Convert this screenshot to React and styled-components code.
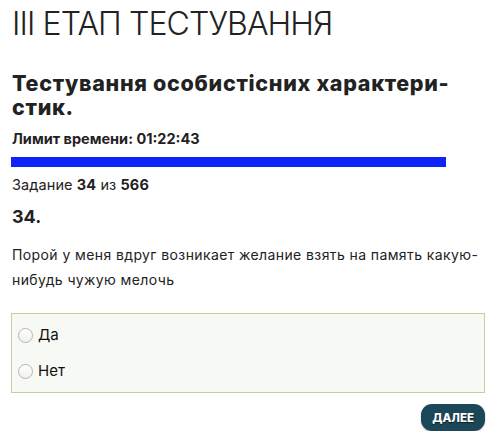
import React from "react";
import styled, { createGlobalStyle } from "styled-components";

const Global = createGlobalStyle`
  html, body { margin: 0; padding: 0; background: #fff; }
  body { font-family: Inter, "Liberation Sans", Arial, sans-serif; color: #222; }
`;

const Page = styled.div`
  padding: 5px 0 0 12px;
  width: 478px;
`;

const StageTitle = styled.h1`
  margin: 0;
  font-family: Inter, "Liberation Sans", sans-serif;
  font-weight: 300;
  font-size: 32px;
  line-height: 38px;
  color: #222;
  letter-spacing: -0.9px;
`;

const TestTitle = styled.h2`
  margin: 28px 0 0;
  font-size: 21.5px;
  line-height: 24px;
  font-weight: 800;
  color: #222;
  letter-spacing: 0.7px;
`;

const Timer = styled.div`
  margin-top: 11px;
  font-size: 14.5px;
  font-weight: 700;
  line-height: 18px;
  color: #222;
`;

const Bar = styled.div`
  margin-top: 9px;
  height: 10px;
  width: 435px;
  margin-left: -1px;
  background: #0f22f8;
`;

const Counter = styled.div`
  margin-top: 9px;
  font-size: 14.5px;
  line-height: 18px;
  color: #222;
  letter-spacing: 0.1px;
  b { font-weight: 700; }
`;

const Number = styled.h3`
  margin: 12px 0 0;
  font-size: 18px;
  line-height: 22px;
  font-weight: 700;
  color: #222;
`;

const Question = styled.p`
  margin: 14px 0 0;
  font-size: 14px;
  line-height: 25px;
  color: #222;
  letter-spacing: 0.4px;
`;

const Answers = styled.div`
  margin: 21px 5px 0 -1px;
  border: 1px solid #c3d29c;
  background: #f7f9f4;
  padding: 9px 6px 9px;
  display: flex;
  flex-direction: column;
  gap: 12px;
`;

const Option = styled.label`
  display: flex;
  align-items: center;
  gap: 5px;
  font-size: 15px;
  line-height: 24px;
  color: #111;
  cursor: pointer;
`;

const Radio = styled.span`
  width: 13px;
  height: 13px;
  border-radius: 50%;
  border: 1px solid #b5b5b5;
  background: linear-gradient(#fff, #f0f0f0);
  flex: none;
`;

const Footer = styled.div`
  display: flex;
  justify-content: flex-end;
  margin-top: 11px;
  padding-right: 5px;
`;

const NextButton = styled.button`
  border: none;
  background: #1b4759;
  color: #fff;
  font-family: Inter, "Liberation Sans", Arial, sans-serif;
  font-weight: 800;
  font-size: 11.5px;
  text-transform: uppercase;
  padding: 0 11px;
  height: 27px;
  border-radius: 11px;
  text-shadow: 0 1px 1px rgba(0,0,0,0.6);
  box-shadow: 0 1px 2px rgba(0,0,0,0.25);
`;

export default function App() {
  return (
    <>
      <Global />
      <Page>
        <StageTitle>III ЕТАП ТЕСТУВАННЯ</StageTitle>
        <TestTitle>
          Тестування особистісних характери-
          <br />
          стик.
        </TestTitle>
        <Timer>Лимит времени: 01:22:43</Timer>
        <Bar />
        <Counter>
          Задание <b>34</b> из <b>566</b>
        </Counter>
        <Number>34.</Number>
        <Question>
          Порой у меня вдруг возникает желание взять на память какую-нибудь чужую мелочь
        </Question>
        <Answers>
          <Option>
            <Radio />
            Да
          </Option>
          <Option>
            <Radio />
            Нет
          </Option>
        </Answers>
        <Footer>
          <NextButton>Далее</NextButton>
        </Footer>
      </Page>
    </>
  );
}
